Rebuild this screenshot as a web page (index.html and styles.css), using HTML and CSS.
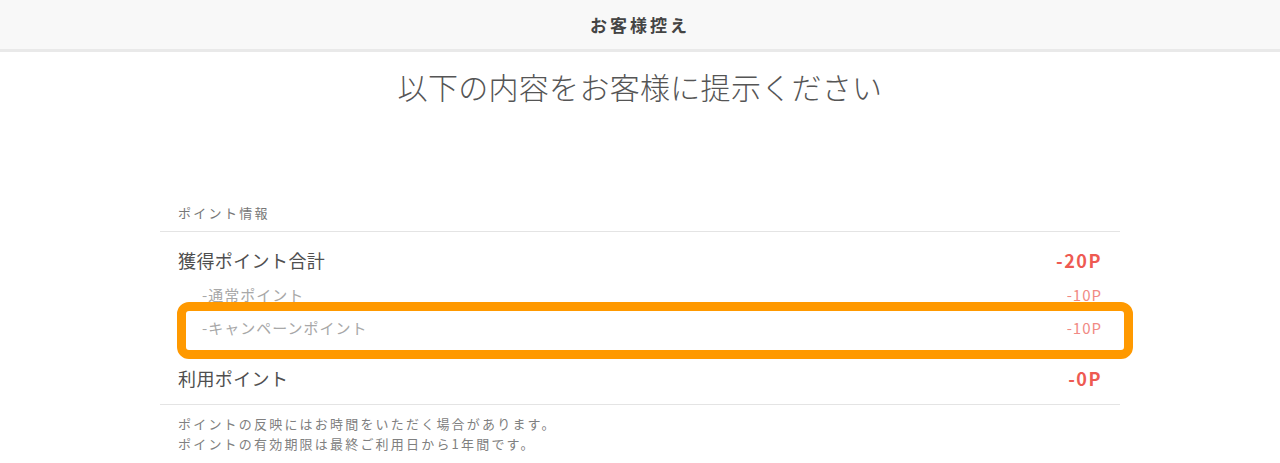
FILE: index.html
```html
<!DOCTYPE html>
<html lang="ja">
<head>
  <meta charset="UTF-8" />
  <meta name="viewport" content="width=device-width, initial-scale=1.0"/>
  <title>お客様控え</title>
  <link rel="stylesheet" href="styles.css">
</head>
<body>
  <div class="topbar">お客様控え</div>

  <h1 class="lead">以下の内容をお客様に提示ください</h1>

  <div class="page">
    <div class="section-label">ポイント情報</div>

    <div class="points">
      <div class="row main first">
        <span>獲得ポイント合計</span>
        <span class="value">-20P</span>
      </div>
      <div class="row sub">
        <span>-通常ポイント</span>
        <span class="value">-10P</span>
      </div>
      <div class="row sub highlighted">
        <span>-キャンペーンポイント</span>
        <span class="value">-10P</span>
        <span class="marker"></span>
      </div>
      <div class="row main last">
        <span>利用ポイント</span>
        <span class="value">-0P</span>
      </div>
    </div>

    <div class="notes">
      <p>ポイントの反映にはお時間をいただく場合があります。</p>
      <p>ポイントの有効期限は最終ご利用日から1年間です。</p>
    </div>
  </div>
</body>
</html>
```

FILE: styles.css
```css
:root {
  --text: #4f4f4f;
  --muted: #a8a8a8;
  --line: #e4e4e4;
  --red: #ee5a52;
  --red-light: #f18a84;
  --orange: #ff9900;
}

body {
  margin: 0;
  font-family: "Noto Sans CJK JP", "Noto Sans", sans-serif;
  color: var(--text);
  background: #fff;
}

.topbar {
  height: 49px;
  line-height: 49px;
  background: #f8f8f8;
  border-bottom: 3px solid #e9e9e9;
  text-align: center;
  font-size: 17px;
  font-weight: bold;
  letter-spacing: 3px;
  color: #444;
}

.lead {
  margin: 14px 0 0;
  font-size: 30px;
  line-height: 40px;
  font-weight: 300;
  letter-spacing: 0.3px;
  text-align: center;
  color: #555;
}

.page {
  width: 960px;
  margin: 97px auto 0;
}

.section-label {
  padding: 0 18px 8px;
  font-size: 13px;
  line-height: 20px;
  letter-spacing: 2.3px;
  color: #777;
  border-bottom: 1px solid var(--line);
}

.points {
  border-bottom: 1px solid var(--line);
}

.row {
  display: flex;
  justify-content: space-between;
  align-items: center;
  padding: 0 18px;
}

.value {
  letter-spacing: 1px;
}

.row.main {
  font-size: 18px;
  line-height: 24px;
  letter-spacing: 0.4px;
}

.row.main .value {
  color: var(--red);
  font-weight: 600;
  letter-spacing: 1.5px;
}

.row.first {
  padding-top: 16px;
  padding-bottom: 13px;
}

.row.last {
  padding-top: 28px;
  padding-bottom: 14px;
}

.row.sub {
  padding-left: 42px;
  font-size: 15px;
  line-height: 20px;
  letter-spacing: 1px;
  color: var(--muted);
}

.row.sub .value {
  color: var(--red-light);
}

.row.highlighted {
  position: relative;
  margin-top: 13px;
}

.marker {
  position: absolute;
  left: 17px;
  right: -13px;
  top: -16px;
  bottom: -21px;
  border: 9px solid var(--orange);
  border-radius: 12px;
}

.notes {
  padding: 9px 18px 0;
  font-size: 13px;
  line-height: 20px;
  letter-spacing: 2.2px;
  color: #808080;
}

.notes p {
  margin: 0;
}
```
